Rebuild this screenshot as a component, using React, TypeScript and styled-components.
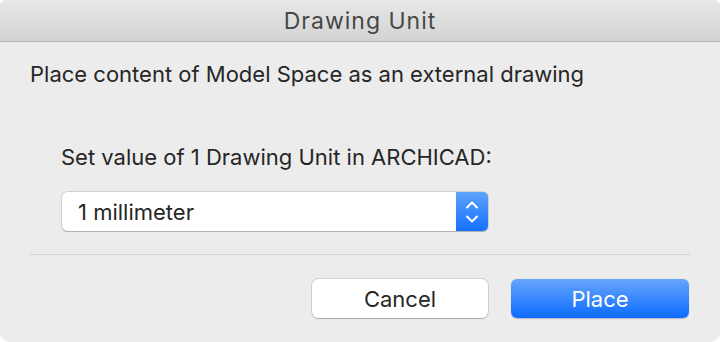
import React from "react";
import styled, { createGlobalStyle } from "styled-components";

const Global = createGlobalStyle`
  html, body { margin: 0; padding: 0; background: #ffffff; }
  body { font-family: Inter, "Noto Sans", "Liberation Sans", sans-serif; -webkit-font-smoothing: antialiased; }
`;

const Window = styled.div`
  width: 720px;
  height: 342px;
  display: flex;
  flex-direction: column;
  background: #ececec;
  border-radius: 6px 6px 10px 10px;
  overflow: hidden;
  box-sizing: border-box;
`;

const TitleBar = styled.div`
  height: 41px;
  flex: 0 0 41px;
  display: flex;
  align-items: center;
  justify-content: center;
  background: linear-gradient(#e8e8e8, #d3d3d3);
  border-bottom: 1px solid #b3b3b3;
  color: #474747;
  font-size: 23px;
  letter-spacing: 1px;
`;

const Content = styled.div`
  flex: 1;
  display: flex;
  flex-direction: column;
  padding: 0 30px;
  color: #262626;
`;

const Message = styled.div`
  margin-top: 19px;
  font-size: 22px;
  line-height: 26px;
`;

const Group = styled.div`
  margin-top: 57px;
  padding-left: 31px;
  display: flex;
  flex-direction: column;
  align-items: flex-start;
`;

const Label = styled.div`
  font-size: 22px;
  line-height: 26px;
`;

const Select = styled.div`
  margin-top: 22px;
  margin-left: 1px;
  width: 426px;
  height: 39px;
  box-sizing: border-box;
  display: flex;
  background: #ffffff;
  border-radius: 5px;
  box-shadow: 0 0 0 0.5px rgba(0, 0, 0, 0.22), 0 1px 1px rgba(0, 0, 0, 0.18);
  overflow: hidden;
`;

const SelectValue = styled.div`
  flex: 1;
  display: flex;
  align-items: center;
  padding-left: 16px;
  font-size: 22px;
  color: #262626;
`;

const Stepper = styled.div`
  width: 32px;
  display: flex;
  align-items: center;
  justify-content: center;
  background: linear-gradient(#5ea2fb, #1470fe);
`;

const Divider = styled.div`
  margin-top: 23px;
  height: 1px;
  background: #d3d3d3;
`;

const Buttons = styled.div`
  margin-top: 24px;
  display: flex;
  justify-content: flex-end;
  gap: 23px;
  padding-right: 1px;
`;

const Button = styled.div<{ $primary?: boolean }>`
  width: ${(p) => (p.$primary ? 178 : 176)}px;
  height: 39px;
  display: flex;
  align-items: center;
  justify-content: center;
  border-radius: 6px;
  font-size: 22px;
  box-sizing: border-box;
  color: ${(p) => (p.$primary ? "#ffffff" : "#262626")};
  background: ${(p) =>
    p.$primary ? "linear-gradient(#66a6fc, #0d6bff)" : "#ffffff"};
  box-shadow: ${(p) =>
    p.$primary
      ? "0 0.5px 1px rgba(0,0,0,0.2)"
      : "0 0 0 0.5px rgba(0,0,0,0.22), 0 1px 1px rgba(0,0,0,0.18)"};
`;

const Chevrons = () => (
  <svg width="14" height="26" viewBox="0 0 14 26" fill="none">
    <path d="M2 8.5 L7 3.5 L12 8.5" stroke="#fff" strokeWidth="2" strokeLinecap="round" strokeLinejoin="round" />
    <path d="M2 17.5 L7 22.5 L12 17.5" stroke="#fff" strokeWidth="2" strokeLinecap="round" strokeLinejoin="round" />
  </svg>
);

export default function App() {
  return (
    <>
      <Global />
      <Window>
        <TitleBar>Drawing Unit</TitleBar>
        <Content>
          <Message>Place content of Model Space as an external drawing</Message>
          <Group>
            <Label>Set value of 1 Drawing Unit in ARCHICAD:</Label>
            <Select>
              <SelectValue>1 millimeter</SelectValue>
              <Stepper>
                <Chevrons />
              </Stepper>
            </Select>
          </Group>
          <Divider />
          <Buttons>
            <Button>Cancel</Button>
            <Button $primary>Place</Button>
          </Buttons>
        </Content>
      </Window>
    </>
  );
}
